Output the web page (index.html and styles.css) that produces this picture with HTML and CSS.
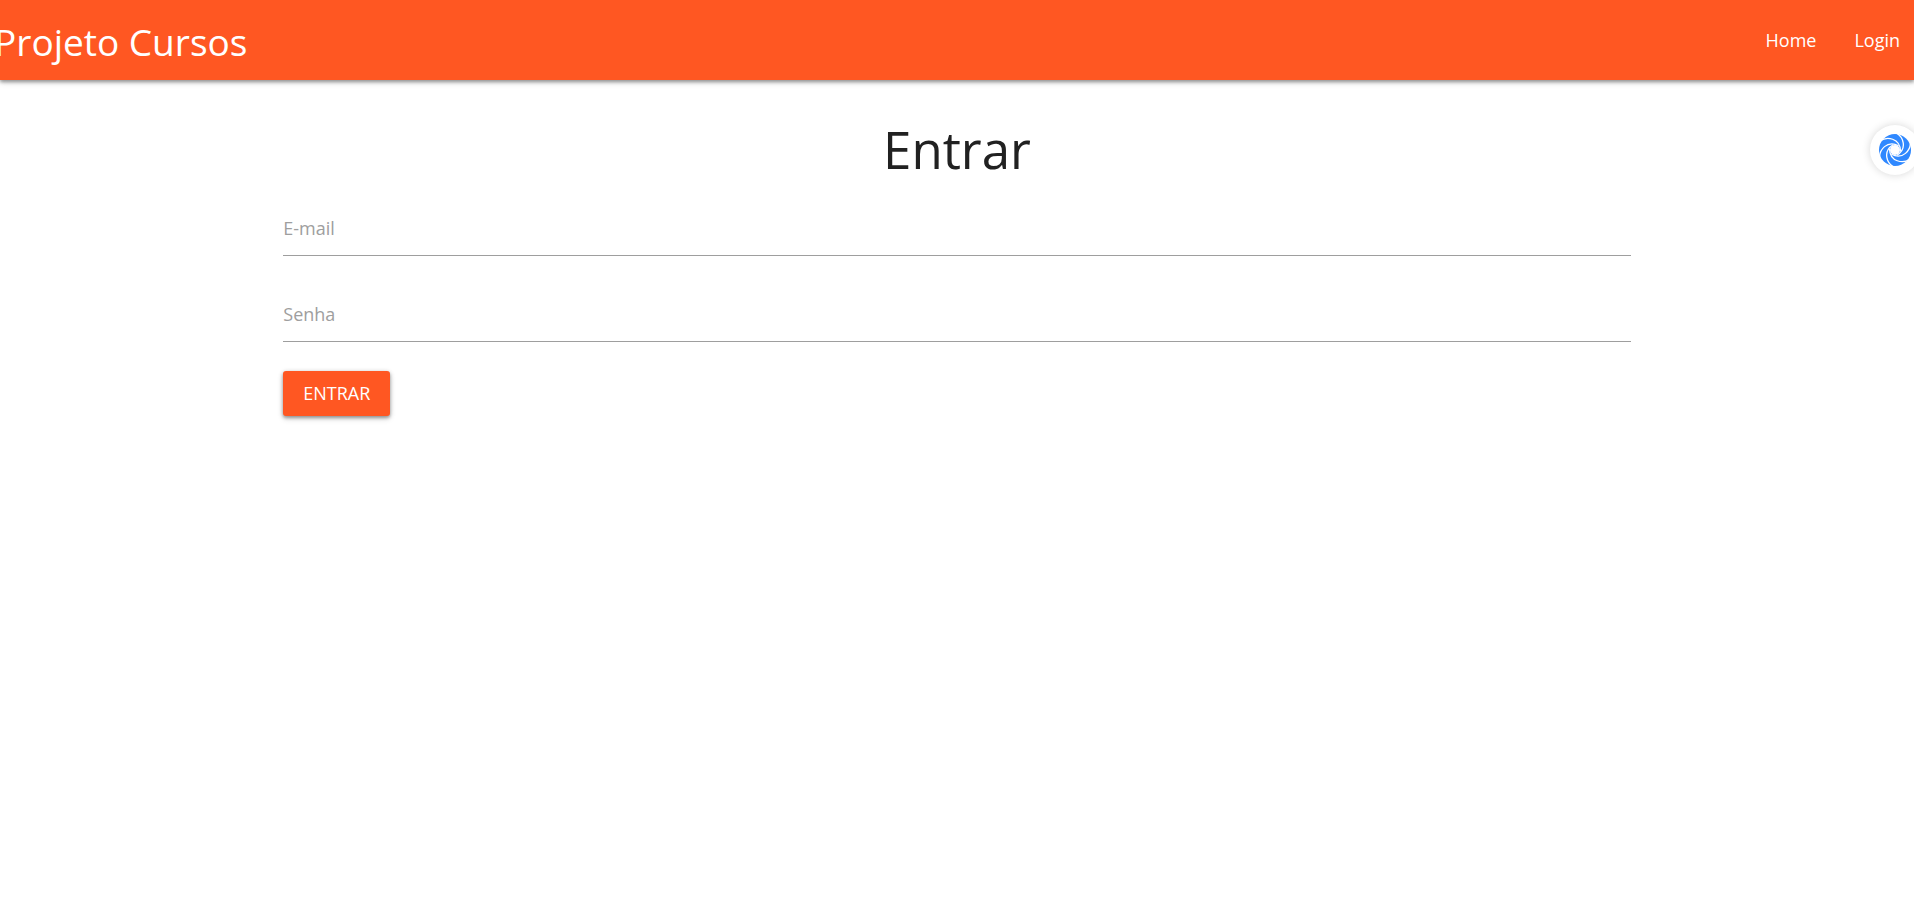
FILE: index.html
```html
<!DOCTYPE html>
<html lang="pt-br">
<head>
<meta charset="utf-8">
<title>Projeto Cursos</title>
<link rel="stylesheet" href="styles.css">
</head>
<body>
<nav class="navbar">
  <a class="brand" href="#">Projeto Cursos</a>
  <ul class="nav-links">
    <li><a href="#">Home</a></li>
    <li><a href="#">Login</a></li>
  </ul>
</nav>
<main class="container">
  <h1 class="heading">Entrar</h1>
  <form class="login-form">
    <div class="field">
      <label for="email">E-mail</label>
      <input id="email" type="email">
    </div>
    <div class="field">
      <label for="senha">Senha</label>
      <input id="senha" type="password">
    </div>
    <button class="btn" type="button">Entrar</button>
  </form>
</main>
<button class="widget" type="button" aria-label="Assistente">
  <svg viewBox="-16 -16 32 32" width="32" height="32" aria-hidden="true">
    <defs>
      <path id="gap" d="M-15 -9C-8 -14 5 -12 5.500 1"/>
    </defs>
    <circle r="16" fill="#2f88ff"/>
    <circle r="5" fill="#fff"/>
    <g fill="none" stroke="#fff" stroke-width="1.300">
      <use href="#gap"/>
      <use href="#gap" transform="rotate(60)"/>
      <use href="#gap" transform="rotate(120)"/>
      <use href="#gap" transform="rotate(180)"/>
      <use href="#gap" transform="rotate(240)"/>
      <use href="#gap" transform="rotate(300)"/>
    </g>
  </svg>
</button>
</body>
</html>
```
FILE: styles.css
```css
* { box-sizing: border-box; }
body {
  margin: 0;
  min-height: 100vh;
  background: #fff;
  color: #212121;
  font: 18px/27px "Open Sans", "Noto Sans", sans-serif;
}
a { color: inherit; text-decoration: none; }
.navbar {
  display: flex;
  justify-content: space-between;
  height: 80px;
  line-height: 80px;
  background: #ff5722;
  color: #fff;
  box-shadow: 0 2px 3px rgba(0,0,0,.24), 0 3px 6px rgba(0,0,0,.12), 0 1px 5px rgba(0,0,0,.2);
}
.brand { margin-left: -6px; font-size: 37px; line-height: 84px; }
.nav-links { display: flex; margin: 0; padding: 0; list-style: none; }
.nav-links a { display: block; padding: 0 14px 0 24px; }
.container { width: 70.4%; margin: 0 auto; }
.heading {
  margin: 0;
  padding: 36px 0 26px;
  font-size: 51px;
  line-height: 66px;
  font-weight: 400;
  text-align: center;
}
.field { display: flex; flex-direction: column; height: 86px; }
.field + .field { height: 77px; }
.field label { color: #9e9e9e; padding-top: 7px; }
.field input {
  flex: none;
  height: 14px;
  padding: 0;
  border: 0;
  border-bottom: 1px solid #9e9e9e;
  background: transparent;
  font: inherit;
  outline: 0;
}
.btn {
  height: 45px;
  padding: 0 20px;
  border: 0;
  border-radius: 3px;
  background: #ff5722;
  color: #fff;
  font: inherit;
  text-transform: uppercase;
  box-shadow: 0 2px 3px rgba(0,0,0,.24), 0 3px 6px rgba(0,0,0,.12), 0 1px 5px rgba(0,0,0,.2);
}
.widget {
  position: fixed;
  top: 125px;
  right: -6px;
  display: grid;
  place-items: center;
  width: 50px;
  height: 50px;
  padding: 0;
  border: 0;
  border-radius: 50%;
  background: #fff;
  box-shadow: 0 0 8px rgba(0,0,0,.16);
}
```
